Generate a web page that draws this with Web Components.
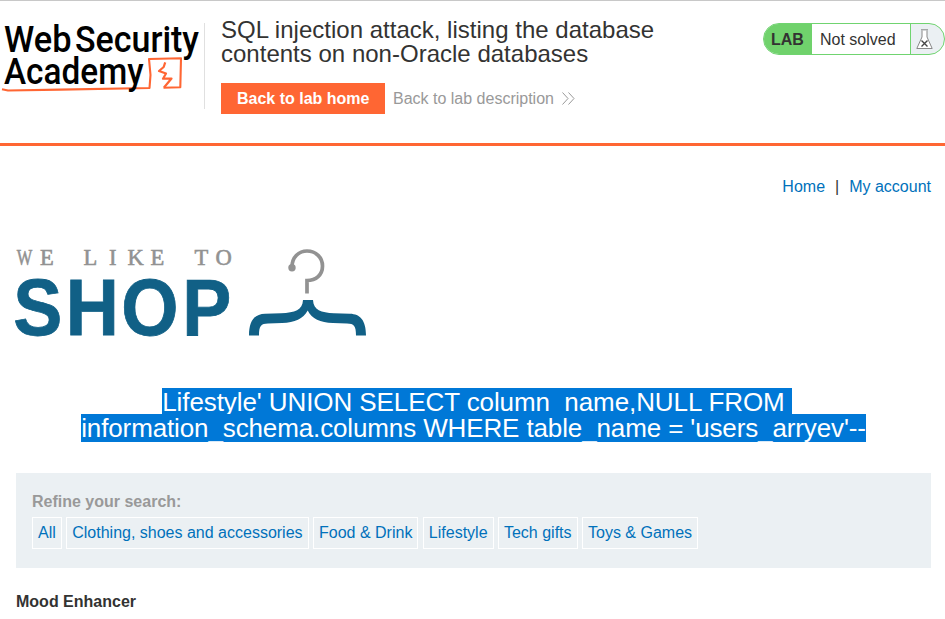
<!DOCTYPE html>
<html lang="en">
<head>
<meta charset="utf-8">
<title>SQL injection attack, listing the database contents on non-Oracle databases</title>
<style>
body{margin:0;background:#fff;color:#333332;font:16px/1.15 "Liberation Sans",Arial,sans-serif;overflow:hidden}
</style>
</head>
<body>
<shop-page></shop-page>
<script>
const define = (name, html) => {
  const t = document.createElement('template');
  t.innerHTML = html;
  customElements.define(name, class extends HTMLElement {
    constructor() {
      super();
      this.attachShadow({mode: 'open'}).append(t.content.cloneNode(true));
    }
  });
};

define('academy-logo', `
<style>:host{display:block;width:204px;height:86px}svg{display:block;overflow:visible}</style>
<svg width="204" height="86" viewBox="0 23 204 86">
  <g font-family="Roboto, sans-serif" font-weight="500" font-size="37.5" fill="#000">
    <text x="4" y="51.7" textLength="67.5" lengthAdjust="spacingAndGlyphs">Web</text>
    <text x="75" y="51.7" textLength="124" lengthAdjust="spacingAndGlyphs">Security</text>
    <path d="M2 89.200 8 90.500 60 89.600 149.500 88 150.500 75 149 59 181 58.300 180.300 87.300 163.500 87.800" fill="none" stroke="#ff6633" stroke-width="2.100" stroke-linejoin="round"/>
    <text x="4" y="84" textLength="139.500" lengthAdjust="spacingAndGlyphs">Academy</text>
  </g>
  <path d="M165.200 62.300 163.700 67 159 71 166 73.500 163 78.700 171.500 78.500 164 87.500" fill="none" stroke="#ff6633" stroke-width="2.200" stroke-linejoin="round"/>
</svg>`);

define('action-button', `
<style>:host{display:flex;align-items:center;box-sizing:border-box;height:31px;padding:2px 16px 0;background:#ff6633;color:#fff;font-weight:700}</style><slot></slot>`);

define('lab-status', `
<style>
:host{display:flex;box-sizing:border-box;width:183px;height:32px;border:1px solid #70d470;border-radius:16px;overflow:hidden;background:#ebf0f3}
b{display:flex;align-items:center;padding:3px 0 0 7px;width:41px;background:#70d26c}
span{display:flex;align-items:center;width:90px;padding:2px 0 0 8px;background:#fff;border-right:1px solid #70d470}
svg{margin:5px 0 0 5px;flex:none}
</style>
<b>LAB</b><span>Not solved</span>
<svg width="17" height="21" viewBox="0 0 17 21" fill="none" stroke="#888">
<path d="M6 1.500V8L.800 19.500H16.200L11 8V1.500" fill="#fff"/><path d="M5 .800H12"/><path d="M5.500 11.500 11.500 17.500M11.500 11.500 5.500 17.500" stroke="#444" stroke-width="1.400"/></svg>`);

define('lab-header', `
<style>
:host{display:flex;box-sizing:border-box;height:146px;border-top:1px solid #c8c8c8;border-bottom:3px solid #ff6633;padding-top:22px}
.title{box-sizing:border-box;border-left:1px solid #e0e0e0;height:86px;width:559px;padding-left:16px;flex:none}
h2{font-size:24px;line-height:24px;font-weight:400;margin:-5px 0 17px;width:460px;letter-spacing:.01px}
.row{display:flex;align-items:center;gap:8px;color:#999}
.link{display:flex;align-items:center;gap:8px;padding-top:2px;margin-left:-.500px}
.link svg{margin-top:-2px}
</style>
<academy-logo></academy-logo>
<div class="title"><h2>SQL injection attack, listing the database contents on non-Oracle databases</h2>
<div class="row"><action-button>Back to lab home</action-button>
<span class="link">Back to lab description <svg width="13" height="13" viewBox="0 0 13 13" fill="none" stroke="#999"><path d="M.5.5 6 6.5.5 12.5M6.5.5 12 6.5 6.5 12.5"/></svg></span></div></div>
<lab-status></lab-status>`);

define('shop-nav', `
<style>:host{display:flex;justify-content:flex-end;gap:10px;padding-top:32px;height:17px}a{color:#0071bb}</style>
<a>Home</a><span>|</span><a>My account</a>`);

define('shop-logo', `
<style>:host{display:block;width:352px;height:92px;margin-top:51px}svg{display:block;overflow:visible}</style>
<svg width="352" height="92" viewBox="16 246 352 92">
  <g font-family="Liberation Serif, serif" font-size="22.500" fill="#929292" stroke="#929292" stroke-width=".6">
    <text x="16.800" y="264.500" textLength="15.500" lengthAdjust="spacingAndGlyphs">W</text>
    <text x="40" y="264.500">E</text>
    <text x="83.500 109 127.500 150.500" y="264.500">LIKE</text>
    <text x="194.500 215.500" y="264.500">TO</text>
  </g>
  <text transform="scale(.92 1)" x="14.500 71.500 131.700 198.200" y="335.300" font-family="Liberation Sans, sans-serif" font-weight="700" font-size="80" fill="#116086" stroke="#116086" stroke-width=".8">SHOP</text>
  <path d="M292 267C292 257 299 251 307 251C316 251 322.500 257.500 322.500 266C322.500 275 316 280.500 307 280.500V293.500" fill="none" stroke="#929292" stroke-width="3.700"/>
  <circle cx="292" cy="267.700" r="3.700" fill="#929292"/>
  <path d="M303 300H313C313.500 310 321 312.700 334 313.200L350 313.700C360 314 366 320 366 335.500H356C356 326 354 323.500 347 323.500L333 323C320 322.500 312 319 307.700 310.500C303 319 295 322.500 282 323L268 323.500C261 323.500 259 326 259 335.500H249C249 320 255 314 265 313.700L281 313.200C295 312.700 302.500 310 303 300Z" fill="#116086"/>
</svg>`);

define('query-heading', `
<style>
:host{display:block;margin-top:50px}
h1{display:flex;flex-direction:column;align-items:center;margin:0;font-size:26px;line-height:28px;font-weight:400;color:#fff;white-space:pre}
span{display:block;background:#0078d7;height:26px;letter-spacing:-.085px;margin-left:7px}
span+span{position:relative;height:28px;letter-spacing:-.127px;margin-left:0}
i{font-style:normal;line-height:0;vertical-align:-1px}
</style>
<h1><span>Lifestyle' UNION SELECT column<i>_</i>name,NULL FROM </span><span>information<i>_</i>schema.columns WHERE table<i>_</i>name = 'users<i>_</i>arryev'--</span></h1>`);

define('filter-link', `
<style>:host{display:flex;align-items:center;box-sizing:border-box;height:32px;padding:0 5px;border:1px solid #fff;color:#0071bb;white-space:nowrap}</style><slot></slot>`);

define('search-filters', `
<style>
:host{display:block;box-sizing:border-box;height:95px;margin-top:31px;padding:19px 16px;background:#ebf0f3}
label{display:block;font-weight:700;color:#999;line-height:19px;margin-bottom:6px}
div{display:flex;gap:4.450px}
</style>
<label>Refine your search:</label>
<div><filter-link>All</filter-link><filter-link>Clothing, shoes and accessories</filter-link><filter-link>Food &amp; Drink</filter-link><filter-link>Lifestyle</filter-link><filter-link>Tech gifts</filter-link><filter-link>Toys &amp; Games</filter-link></div>`);

define('shop-page', `
<style>:host{display:block;height:619px;overflow:hidden}main{padding:0 14px 0 16px}h3{font-size:16px;line-height:18px;margin:25px 0 0}</style>
<lab-header></lab-header>
<main><shop-nav></shop-nav><shop-logo></shop-logo><query-heading></query-heading><search-filters></search-filters><h3>Mood Enhancer</h3></main>`);
</script>
</body>
</html>
